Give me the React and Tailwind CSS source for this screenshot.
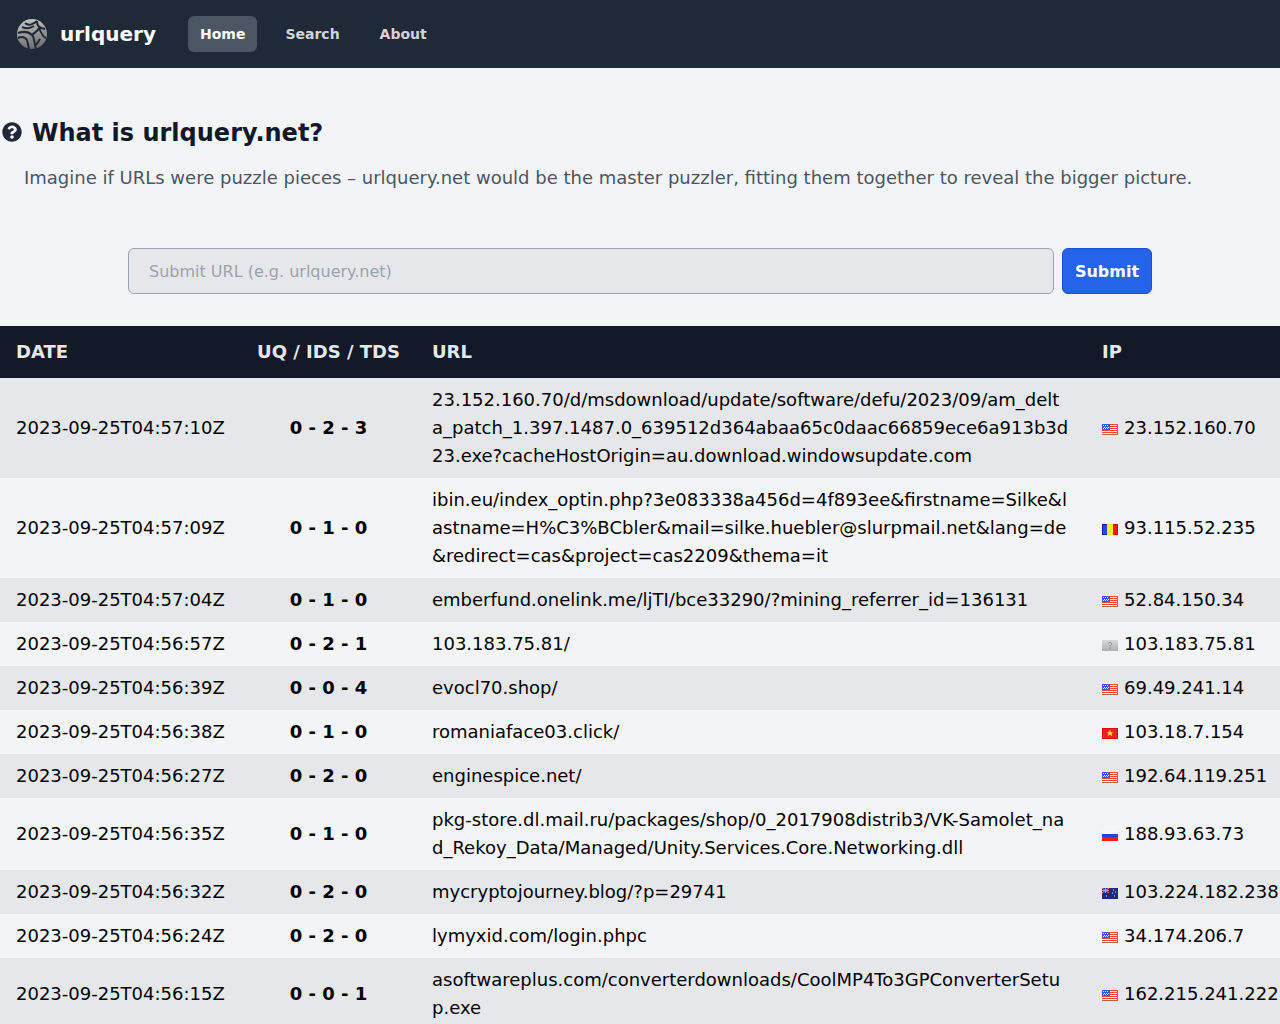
import React from 'react';
import { FaQuestionCircle } from 'react-icons/fa';

// small 16x11 country flags
const flagClass = 'mt-[3px] shrink-0';

const FlagUS = () => (
	<svg width="16" height="11" viewBox="0 0 16 11" className={flagClass} shapeRendering="crispEdges">
		<rect width="16" height="11" fill="#fdf3f0" />
		<path d="M0 0.500h16M0 2.500h16M0 4.500h16M0 6.500h16M0 8.500h16" stroke="#f0483c" strokeWidth="1" />
		<rect width="8" height="6" fill="#3559e0" />
		<path d="M1 1.500h1M3 1.500h1M5 1.500h1M2 3.500h1M4 3.500h1M6 3.500h1M1 4.500h1M3 4.500h1M5 4.500h1" stroke="#e8edff" strokeWidth="1" />
		<path d="M0 10.500h16M15.500 0v11" stroke="#b0664a" strokeWidth="1" />
	</svg>
);

const FlagRO = () => (
	<svg width="16" height="11" viewBox="0 0 16 11" className={flagClass} shapeRendering="crispEdges">
		<rect width="5" height="11" fill="#2b46c8" />
		<rect x="5" width="6" height="11" fill="#f9e72c" />
		<rect x="11" width="5" height="11" fill="#f01818" />
		<path d="M0.500 0v11M0 0.500h5M0 10.500h5" stroke="#0c1ea8" strokeWidth="1" />
		<path d="M15.500 0v11M11 0.500h5M11 10.500h5" stroke="#d00c0c" strokeWidth="1" />
	</svg>
);

const FlagUnknown = () => (
	<svg width="16" height="11" viewBox="0 0 16 11" className={flagClass}>
		<defs>
			<linearGradient id="unknownFlag" x1="0" y1="0" x2="0" y2="1">
				<stop stopColor="#d6d9dc" />
				<stop offset="1" stopColor="#aeb1b4" />
			</linearGradient>
		</defs>
		<rect width="16" height="11" fill="url(#unknownFlag)" />
		<path d="M6.500 3.500C6.500 2 9.500 2 9.500 3.700C9.500 5 8 5 8 6.500M8 7.500v1.500" stroke="#84878b" strokeWidth="1" fill="none" />
	</svg>
);

const FlagVN = () => (
	<svg width="16" height="11" viewBox="0 0 16 11" className={flagClass}>
		<rect width="16" height="11" fill="#f11f1f" />
		<rect x="0.500" y="0.500" width="15" height="10" fill="none" stroke="#d40f0f" />
		<path d="M8 2l1 2.300h2.400l-1.900 1.500.7 2.400L8 6.800 5.800 8.200l.7-2.400-1.900-1.500H7z" fill="#fbe83a" />
	</svg>
);

const FlagRU = () => (
	<svg width="16" height="11" viewBox="0 0 16 11" className={flagClass} shapeRendering="crispEdges">
		<rect width="16" height="4" fill="#f8f8fb" />
		<rect y="4" width="16" height="3" fill="#2c3fd8" />
		<rect y="7" width="16" height="4" fill="#ee1c1c" />
	</svg>
);

const FlagAU = () => (
	<svg width="16" height="11" viewBox="0 0 16 11" className={flagClass}>
		<rect width="16" height="11" fill="#1c2a78" />
		<path d="M0 0l7 5M7 0L0 5M3.500 0v5M0 2.500h7" stroke="#d98a9a" strokeWidth="1" />
		<path d="M11 2h1M13 4h1M10 5h1M12 8h1M4 8h1" stroke="#e6e9f5" strokeWidth="1" />
	</svg>
);

const rows = [
	{ date: '2023-09-25T04:57:10Z', score: '0 - 2 - 3', url: '23.152.160.70/d/msdownload/update/software/defu/2023/09/am_delta_patch_1.397.1487.0_639512d364abaa65c0daac66859ece6a913b3d23.exe?cacheHostOrigin=au.download.windowsupdate.com', flag: <FlagUS />, ip: '23.152.160.70' },
	{ date: '2023-09-25T04:57:09Z', score: '0 - 1 - 0', url: 'ibin.eu/index_optin.php?3e083338a456d=4f893ee&firstname=Silke&lastname=H%C3%BCbler&mail=silke.huebler@slurpmail.net&lang=de&redirect=cas&project=cas2209&thema=it', flag: <FlagRO />, ip: '93.115.52.235' },
	{ date: '2023-09-25T04:57:04Z', score: '0 - 1 - 0', url: 'emberfund.onelink.me/ljTI/bce33290/?mining_referrer_id=136131', flag: <FlagUS />, ip: '52.84.150.34' },
	{ date: '2023-09-25T04:56:57Z', score: '0 - 2 - 1', url: '103.183.75.81/', flag: <FlagUnknown />, ip: '103.183.75.81' },
	{ date: '2023-09-25T04:56:39Z', score: '0 - 0 - 4', url: 'evocl70.shop/', flag: <FlagUS />, ip: '69.49.241.14' },
	{ date: '2023-09-25T04:56:38Z', score: '0 - 1 - 0', url: 'romaniaface03.click/', flag: <FlagVN />, ip: '103.18.7.154' },
	{ date: '2023-09-25T04:56:27Z', score: '0 - 2 - 0', url: 'enginespice.net/', flag: <FlagUS />, ip: '192.64.119.251' },
	{ date: '2023-09-25T04:56:35Z', score: '0 - 1 - 0', url: 'pkg-store.dl.mail.ru/packages/shop/0_2017908distrib3/VK-Samolet_nad_Rekoy_Data/Managed/Unity.Services.Core.Networking.dll', flag: <FlagRU />, ip: '188.93.63.73' },
	{ date: '2023-09-25T04:56:32Z', score: '0 - 2 - 0', url: 'mycryptojourney.blog/?p=29741', flag: <FlagAU />, ip: '103.224.182.238' },
	{ date: '2023-09-25T04:56:24Z', score: '0 - 2 - 0', url: 'lymyxid.com/login.phpc', flag: <FlagUS />, ip: '34.174.206.7' },
	{ date: '2023-09-25T04:56:15Z', score: '0 - 0 - 1', url: 'asoftwareplus.com/converterdownloads/CoolMP4To3GPConverterSetup.exe', flag: <FlagUS />, ip: '162.215.241.222' },
];

const Logo = () => (
	<svg width="32" height="32" viewBox="0 0 32 32" className="shrink-0">
		<defs>
			<linearGradient id="logoBall" x1="0.3" y1="0" x2="0.5" y2="1">
				<stop stopColor="#c4c4c4" />
				<stop offset="0.6" stopColor="#8f8f8f" />
				<stop offset="1" stopColor="#6f6f6f" />
			</linearGradient>
		</defs>
		<circle cx="16" cy="16" r="15" fill="url(#logoBall)" />
		<path d="M9 5C12 8 17 7 21 3M21 3C21 8 23 10 29 11M2 15C8 13 12 13 16 17C19 20 18 26 20 31M16 17C19 14 22 13 23 10M23 10C25 15 27 19 30 20M2 20C6 18 9 19 11 22C12 25 12 28 13 31M18 8C15 10 10 11 6 9M24 21C22 24 21 26 20 27" stroke="#1f2937" strokeWidth="2" fill="none" />
	</svg>
);

export default function App() {
	return (
		<div className="min-h-screen overflow-hidden bg-[#f3f4f6] font-['DejaVu_Sans',sans-serif]">
			<nav className="flex h-[68px] items-center bg-[#1f2937] px-4">
				<Logo />
				<span className="ml-3 text-xl font-bold text-white">urlquery</span>
				<div className="ml-8 flex items-center gap-4 text-sm font-bold">
					<a className="rounded-md bg-[#4b5563] px-3 py-2 text-white">Home</a>
					<a className="px-3 py-2 text-[#d1d5db]">Search</a>
					<a className="px-3 py-2 text-[#d1d5db]">About</a>
				</div>
			</nav>

			<div className="pt-12">
				<h1 className="flex h-8 items-start gap-2.5 pl-0.5 text-2xl leading-[34px] font-bold text-[#111827]">
					<FaQuestionCircle className="mt-1.5 h-5 w-5 text-[#1f2937]" />
					What is urlquery.net?
				</h1>
				<p className="mt-4 pl-6 text-lg text-[#4b5563]">
					Imagine if URLs were puzzle pieces – urlquery.net would be the master puzzler, fitting them together to reveal the bigger picture.
				</p>
			</div>

			<form className="mt-14 flex gap-2 pl-32 pr-32">
				<input
					type="text"
					placeholder="Submit URL (e.g. urlquery.net)"
					className="h-[46px] flex-1 rounded-md border border-[#9ca3af] bg-[#e5e7eb] px-5 text-base text-[#111827] placeholder:text-[#9ca3af]"
				/>
				<button type="button" className="h-[46px] w-[90px] rounded-md border border-[#1d4ed8] bg-[#2563eb] pt-px text-base font-bold text-white">
					Submit
				</button>
			</form>

			<table className="mt-8 w-[1280px] table-fixed border-collapse text-lg text-black">
				<colgroup>
					<col className="w-[241px]" />
					<col className="w-[175px]" />
					<col className="w-[670px]" />
					<col className="w-[194px]" />
				</colgroup>
				<thead className="bg-[#111827] text-[#e5e7eb]">
					<tr>
						<th className="px-4 py-3 text-left font-bold">DATE</th>
						<th className="py-3 text-center font-bold whitespace-nowrap">UQ / IDS / TDS</th>
						<th className="px-4 py-3 text-left font-bold">URL</th>
						<th className="px-4 py-3 text-left font-bold">IP</th>
					</tr>
				</thead>
				<tbody>
					{rows.map((row) => (
						<tr key={row.date} className="odd:bg-[#e5e7eb] even:bg-[#f3f4f6]">
							<td className="px-4 py-2 whitespace-nowrap">{row.date}</td>
							<td className="py-2 text-center font-bold">{row.score}</td>
							<td className="px-4 py-2 break-all">{row.url}</td>
							<td className="py-2 pl-4 whitespace-nowrap">
								<span className="flex items-center gap-1.5">
									{row.flag}
									{row.ip}
								</span>
							</td>
						</tr>
					))}
				</tbody>
			</table>
		</div>
	);
}
